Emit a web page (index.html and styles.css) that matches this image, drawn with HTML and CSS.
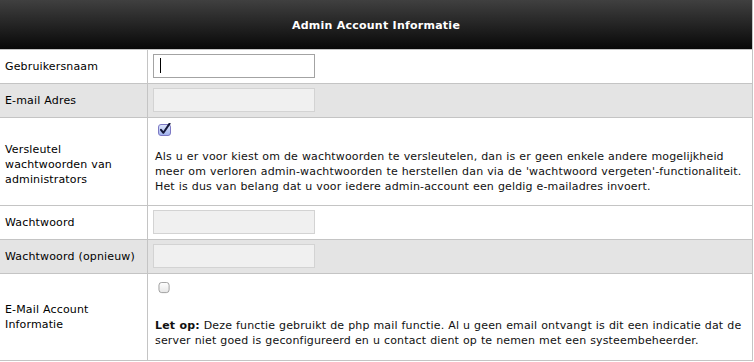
FILE: index.html
```html
<!DOCTYPE html>
<html lang="nl">
<head>
<meta charset="utf-8">
<title>Admin Account Informatie</title>
<link rel="stylesheet" href="styles.css">
</head>
<body>
<div class="panel">
  <div class="head">Admin Account Informatie</div>

  <div class="row">
    <div class="label">Gebruikersnaam</div>
    <div class="value field-cell">
      <span class="field">
        <input class="text focus" type="text">
        <span class="caret"></span>
      </span>
    </div>
  </div>

  <div class="row alt">
    <div class="label">E-mail Adres</div>
    <div class="value field-cell">
      <input class="text" type="text" disabled>
    </div>
  </div>

  <div class="row tall">
    <div class="label label-low">Versleutel wachtwoorden van administrators</div>
    <div class="value stack">
      <svg class="cb cb-on" width="13" height="13" viewBox="0 0 13 13" aria-hidden="true">
        <defs>
          <linearGradient id="gOn" x1="0" y1="0" x2="0" y2="1">
            <stop offset="0" stop-color="#dfe6fb"/>
            <stop offset="1" stop-color="#9fb2ee"/>
          </linearGradient>
        </defs>
        <rect x="0.5" y="1.5" width="12" height="11" rx="2.5" fill="url(#gOn)" stroke="#7d79c4"/>
        <path d="M3 6.8 L5.4 9.8 L11.6 0.6" fill="none" stroke="#14183a" stroke-width="2" stroke-linecap="round" stroke-linejoin="round"/>
      </svg>
      <p class="note">Als u er voor kiest om de wachtwoorden te versleutelen, dan is er geen enkele andere mogelijkheid meer om verloren admin-wachtwoorden te herstellen dan via de 'wachtwoord vergeten'-functionaliteit. Het is dus van belang dat u voor iedere admin-account een geldig e-mailadres invoert.</p>
    </div>
  </div>

  <div class="row">
    <div class="label">Wachtwoord</div>
    <div class="value field-cell">
      <input class="text" type="password" disabled>
    </div>
  </div>

  <div class="row alt">
    <div class="label">Wachtwoord (opnieuw)</div>
    <div class="value field-cell">
      <input class="text" type="password" disabled>
    </div>
  </div>

  <div class="row tall2">
    <div class="label">E-Mail Account Informatie</div>
    <div class="value stack2">
      <svg class="cb cb-off" width="13" height="13" viewBox="0 0 13 13" aria-hidden="true">
        <defs>
          <linearGradient id="gOff" x1="0" y1="0" x2="0" y2="1">
            <stop offset="0" stop-color="#ffffff"/>
            <stop offset="1" stop-color="#e6e6e6"/>
          </linearGradient>
        </defs>
        <rect x="0.5" y="0.5" width="11" height="11" rx="3" fill="url(#gOff)" stroke="#9a9a9a"/>
      </svg>
      <p class="note"><strong>Let op:</strong> Deze functie gebruikt de php mail functie. Al u geen email ontvangt is dit een indicatie dat de server niet goed is geconfigureerd en u contact dient op te nemen met een systeembeheerder.</p>
    </div>
  </div>
</div>
</body>
</html>
```

FILE: styles.css
```css
* { box-sizing: border-box; }

html, body {
  margin: 0;
  padding: 0;
  background: #ffffff;
}

body {
  font-family: "DejaVu Sans", Verdana, sans-serif;
  font-size: 11px;
  line-height: 15px;
  letter-spacing: 0.15px;
  word-spacing: 0.3px;
  color: #000;
}

.panel {
  width: 753px;
  border-right: 1px solid #c4c4c4;
  border-bottom: 1px solid #c4c4c4;
}

.head {
  height: 49px;
  display: flex;
  align-items: center;
  justify-content: center;
  background: linear-gradient(#404040, #080808);
  color: #fff;
  font-weight: bold;
  font-size: 11px;
  letter-spacing: 0.25px;
  word-spacing: 0;
  padding-top: 1px;
}

.row {
  display: grid;
  grid-template-columns: 148px 1fr;
  border-top: 1px solid #c4c4c4;
  min-height: 34px;
  background: #fff;
}

.row.alt { background: #e4e4e4; }

.label {
  border-right: 1px solid #c4c4c4;
  padding: 0 4px 0 5px;
  display: flex;
  align-items: center;
}

.label-low { padding-top: 5px; }

.value {
  padding: 0 5px;
}

.field-cell {
  display: flex;
  align-items: center;
  height: 33px;
  padding-bottom: 1px;
}

.field {
  position: relative;
  display: inline-flex;
}

.text {
  width: 162px;
  height: 24px;
  margin: 0;
  padding: 0 6px;
  border: 1px solid #d3d3d3;
  background: #f0f0f0;
  font: inherit;
  outline: none;
}

.text.focus {
  background: #fff;
  border-color: #a3a3a3;
}

.caret {
  position: absolute;
  left: 7px;
  top: 4px;
  width: 1px;
  height: 15px;
  background: #000;
}

.stack {
  padding: 5px 5px 11px 5px;
}

.stack2 {
  padding: 8px 5px 12px 5px;
}

.cb {
  display: block;
  margin-left: 5px;
}

.cb-off { height: 12px; }

.note {
  margin: 13px 0 0 2px;
  color: #111;
}

.stack2 .note { margin-top: 24px; }

.note strong { font-weight: bold; }
```
